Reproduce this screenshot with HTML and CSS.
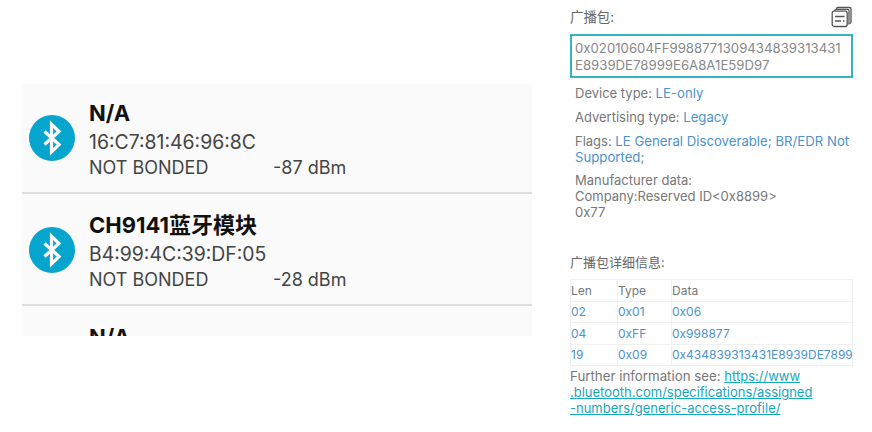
FILE: index.html
```html
<!DOCTYPE html>
<html lang="zh">
<head>
<meta charset="utf-8">
<title>BLE</title>
<link rel="stylesheet" href="styles.css">
</head>
<body>
<main class="page">
  <section class="list">
    <div class="rows">
      <div class="row">
        <div class="bt"><svg viewBox="0 0 46 46" width="46" height="46"><path d="M15.5 16.5 L30 29.5 L22.5 37 V9 L30 16.5 L15.5 29.5" fill="none" stroke="#fff" stroke-width="3.2" stroke-linejoin="miter"/></svg></div>
        <div class="info">
          <div class="name">N/A</div>
          <div class="addr">16:C7:81:46:96:8C</div>
          <div class="status"><span class="bond">NOT BONDED</span><span>-87 dBm</span></div>
        </div>
      </div>
      <div class="row">
        <div class="bt"><svg viewBox="0 0 46 46" width="46" height="46"><path d="M15.5 16.5 L30 29.5 L22.5 37 V9 L30 16.5 L15.5 29.5" fill="none" stroke="#fff" stroke-width="3.2" stroke-linejoin="miter"/></svg></div>
        <div class="info">
          <div class="name">CH9141蓝牙模块</div>
          <div class="addr">B4:99:4C:39:DF:05</div>
          <div class="status"><span class="bond">NOT BONDED</span><span>-28 dBm</span></div>
        </div>
      </div>
      <div class="row">
        <div class="bt"></div>
        <div class="info"><div class="name">N/A</div></div>
      </div>
    </div>
  </section>
  <section class="detail">
    <div class="head">
      <span class="label">广播包:</span>
      <svg class="copy" viewBox="0 0 22 22" width="22" height="22" fill="none" stroke="#555" stroke-width="1.3"><path d="M5.5 3.5 V2.8 Q5.5 1.5 7 1.5 H18.5 Q20 1.5 20 3 V16 Q20 17.5 18.5 17.5"/><path d="M3.8 5 V4.6 Q3.8 3.4 5.2 3.4 H16.6 Q18 3.4 18 4.8 V18.4"/><rect x="1.2" y="5.2" width="15" height="15.3" rx="2"/><path d="M4 10.5 H13.5 M4 15 H10 M12 15 H13.5"/></svg>
    </div>
    <div class="raw">0x02010604FF9988771309434839313431<br>E8939DE78999E6A8A1E59D97</div>
    <div class="prop">Device type: <span class="val">LE-only</span></div>
    <div class="prop">Advertising type: <span class="val">Legacy</span></div>
    <div class="prop flags">Flags: <span class="val">LE General Discoverable; BR/EDR Not Supported;</span></div>
    <div class="prop mfr">Manufacturer data:<br>Company:Reserved ID&lt;0x8899&gt;<br>0x77</div>
    <div class="label sub">广播包详细信息:</div>
    <table class="tbl">
      <tr class="th"><td>Len</td><td>Type</td><td>Data</td></tr>
      <tr><td>02</td><td>0x01</td><td>0x06</td></tr>
      <tr><td>04</td><td>0xFF</td><td>0x998877</td></tr>
      <tr><td>19</td><td>0x09</td><td>0x434839313431E8939DE7899</td></tr>
    </table>
    <p class="more">Further information see: <a href="#">https://www<br>.bluetooth.com/specifications/assigned<br>-numbers/generic-access-profile/</a></p>
  </section>
</main>
</body>
</html>
```
FILE: styles.css
```css
* { box-sizing: border-box; }
html, body { margin: 0; background: #fff; }
body { font-family: "Inter", "Noto Sans CJK SC", sans-serif; color: #555; width: 872px; height: 432px; overflow: hidden; }
.page { display: flex; align-items: flex-start; padding-left: 22px; }
.list { width: 510px; height: 252px; margin-top: 84px; background: #fafafa; overflow: hidden; flex: none; }
.rows { margin-top: -2px; }
.row { height: 112px; border-bottom: 2px solid #dedede; display: flex; align-items: center; padding-left: 7px; gap: 14px; }
.bt { width: 46px; height: 46px; margin-top: 1px; border-radius: 50%; background: #05a5cd; flex: none; }
.bt svg { display: block; }
.row:last-child .bt { visibility: hidden; }
.info { flex: 1; align-self: flex-start; padding-top: 17px; }
.name { font-size: 22px; line-height: 28px; font-weight: 700; color: #111; }
.addr { font-size: 19.4px; line-height: 30px; color: #444; }
.status { font-size: 18px; line-height: 21px; color: #444; display: flex; }
.bond { width: 184px; }
.detail { width: 283px; margin-left: 38px; flex: none; padding-top: 7px; font-size: 13px; color: #777; }
.head { display: flex; justify-content: space-between; align-items: center; height: 20px; }
.label { color: #666; font-size: 13.4px; padding-bottom: 2px; }
.raw { border: 2px solid #35b3c6; margin-top: 7px; height: 44px; padding: 4px 3px; line-height: 17px; font-size: 13.2px; color: #888; white-space: nowrap; }
.prop { padding-left: 5px; line-height: 16px; margin-top: 8px; }
.raw + .prop { margin-top: 7px; }
.val { color: #4b93c9; font-size: 13.2px; }
.mfr { margin-top: 7px; }
.sub { margin-top: 34px; line-height: 16px; font-size: 13px; padding-bottom: 0; }
.tbl { width: 283px; border-collapse: collapse; margin-top: 9px; font-size: 12px; table-layout: fixed; }
.tbl td { border: 1px solid #f0f0f0; height: 21.5px; padding: 0; color: #4b93c9; white-space: nowrap; overflow: hidden; }
.tbl td:nth-child(1) { width: 47px; }
.tbl td:nth-child(2) { width: 54px; }
.tbl .th td { color: #777; }
.more { margin: 2px 0 0; font-size: 13.3px; line-height: 16px; color: #777; }
.more a { color: #16a6bd; font-size: 13px; }
```
